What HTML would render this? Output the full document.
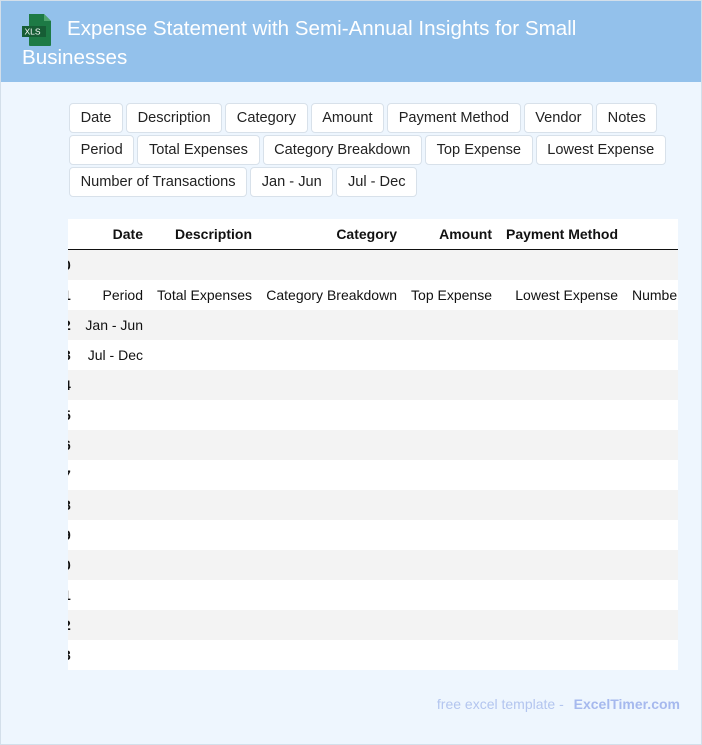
<!DOCTYPE html>
<html><head><meta charset="utf-8"><style>
body{margin:0;width:702px;height:745px;overflow:hidden;font-family:"Liberation Sans",sans-serif;}
.page{position:absolute;left:0;top:0;width:700px;height:743px;background:#eef6fe;border:1px solid #d3dfea;}
.hdr{position:absolute;left:0;top:0;width:700px;height:81px;background:#93c1eb;}
.title{position:absolute;left:21px;top:13px;width:640px;color:#fff;font-size:20.6px;line-height:29px;text-indent:45px;}
.tags{position:absolute;left:68px;top:102px;width:610px;display:flex;flex-wrap:wrap;gap:2px 3px;}
.tag{height:28px;line-height:28px;padding:0 10.6px;background:#fff;border:1px solid #d8e1ea;border-radius:4px;font-size:14.6px;color:#222;}
.tbl{position:absolute;left:67px;top:218px;width:610px;height:451px;background:#fff;overflow:hidden;font-size:14px;color:#111;}
.row{position:absolute;left:0;width:610px;height:30px;}
.g{background:#f3f3f3;}
.c{position:absolute;top:7px;white-space:nowrap;text-align:right;}
.h .c{font-weight:bold;}
.foot{position:absolute;right:21px;top:695px;font-size:14px;color:#b3c5ef;}
.foot b{color:#a6b9ee;margin-left:6px;}
</style></head><body><div class="page">
<div class="hdr"></div>
<svg style="position:absolute;left:19px;top:12px" width="34" height="34" viewBox="0 0 34 34">
<path d="M9 1h15l7 7v24a1 1 0 0 1-1 1H10a1 1 0 0 1-1-1z" fill="#1d7a45"/>
<path d="M24 1v7h7z" fill="#4fa56f"/>
<rect x="2" y="13" width="24" height="11" fill="#165d35"/>
<text x="4.5" y="21.5" font-family="Liberation Sans,sans-serif" font-size="8.5" fill="#fff">XLS</text>
</svg>
<div class="title">Expense Statement with Semi-Annual Insights for Small Businesses</div>
<div class="tags">
<span class="tag">Date</span><span class="tag">Description</span><span class="tag">Category</span><span class="tag">Amount</span><span class="tag">Payment Method</span><span class="tag">Vendor</span><span class="tag">Notes</span>
<span class="tag">Period</span><span class="tag">Total Expenses</span><span class="tag">Category Breakdown</span><span class="tag">Top Expense</span><span class="tag">Lowest Expense</span>
<span class="tag">Number of Transactions</span><span class="tag">Jan - Jun</span><span class="tag">Jul - Dec</span>
</div>
<div class="tbl">
<div class="row h" style="top:0;height:30px;border-bottom:2px solid #111">
<span class="c" style="right:535px">Date</span><span class="c" style="right:426px">Description</span><span class="c" style="right:281px">Category</span><span class="c" style="right:186px">Amount</span><span class="c" style="right:60px">Payment Method</span></div>
<div class="row g" style="top:31px"><span class="c" style="left:-5px;font-weight:bold">0</span></div>
<div class="row" style="top:61px"><span class="c" style="left:-5px;font-weight:bold">1</span><span class="c" style="right:535px">Period</span><span class="c" style="right:426px">Total Expenses</span><span class="c" style="right:281px">Category Breakdown</span><span class="c" style="right:186px">Top Expense</span><span class="c" style="right:60px">Lowest Expense</span><span class="c" style="left:564px;text-align:left">Number</span></div>
<div class="row g" style="top:91px"><span class="c" style="left:-5px;font-weight:bold">2</span><span class="c" style="right:535px">Jan - Jun</span></div>
<div class="row" style="top:121px"><span class="c" style="left:-5px;font-weight:bold">3</span><span class="c" style="right:535px">Jul - Dec</span></div>
<div class="row g" style="top:151px"><span class="c" style="left:-5px;font-weight:bold">4</span></div>
<div class="row" style="top:181px"><span class="c" style="left:-5px;font-weight:bold">5</span></div>
<div class="row g" style="top:211px"><span class="c" style="left:-5px;font-weight:bold">6</span></div>
<div class="row" style="top:241px"><span class="c" style="left:-5px;font-weight:bold">7</span></div>
<div class="row g" style="top:271px"><span class="c" style="left:-5px;font-weight:bold">8</span></div>
<div class="row" style="top:301px"><span class="c" style="left:-5px;font-weight:bold">9</span></div>
<div class="row g" style="top:331px"><span class="c" style="left:-5px;font-weight:bold">0</span></div>
<div class="row" style="top:361px"><span class="c" style="left:-5px;font-weight:bold">1</span></div>
<div class="row g" style="top:391px"><span class="c" style="left:-5px;font-weight:bold">2</span></div>
<div class="row" style="top:421px"><span class="c" style="left:-5px;font-weight:bold">3</span></div>
</div>
<div class="foot">free excel template - <b>ExcelTimer.com</b></div>
</div></body></html>
